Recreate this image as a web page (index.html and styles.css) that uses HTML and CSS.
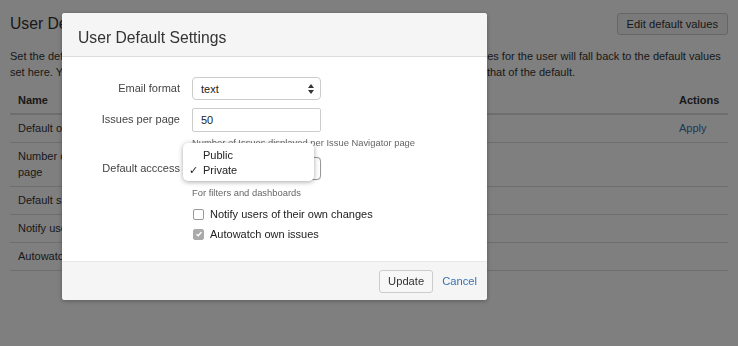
FILE: index.html
```html
<!DOCTYPE html>
<html lang="en">
<head>
    <meta charset="UTF-8">
    <title>User Defaults</title>
    <link rel="stylesheet" href="styles.css">
</head>
<body>
    <div class="page">
        <div class="page-head">
            <h1>User Defaults</h1>
            <button class="btn">Edit default values</button>
        </div>
        <p class="intro">Set the default user's preferences for new users here. When no preferences are set at all, the values for the user will fall back to the default values set here. You can apply any default to the existing users, which replaces their own old values with that of the default.</p>

        <table class="defaults">
            <thead>
                <tr>
                    <th class="col-name">Name</th>
                    <th>Value</th>
                    <th class="col-actions">Actions</th>
                </tr>
            </thead>
            <tbody>
                <tr>
                    <td>Default outgoing email format</td>
                    <td>text</td>
                    <td><a href="#">Apply</a></td>
                </tr>
                <tr>
                    <td>Number of issues displayed per<br>page</td>
                    <td>50</td>
                    <td></td>
                </tr>
                <tr>
                    <td>Default sharing for filters</td>
                    <td>Private</td>
                    <td></td>
                </tr>
                <tr>
                    <td>Notify users of their own changes</td>
                    <td>No</td>
                    <td></td>
                </tr>
                <tr>
                    <td>Autowatch own issues</td>
                    <td>Yes</td>
                    <td></td>
                </tr>
            </tbody>
        </table>
    </div>

    <div class="blanket"></div>

    <div class="dialog">
        <div class="dialog-header">
            <h2>User Default Settings</h2>
        </div>
        <div class="dialog-body">
            <form class="form">
                <label class="form-label">Email format</label>
                <div class="field">
                    <div class="select">
                        <span>text</span>
                        <svg width="6" height="10" viewBox="0 0 6 10"><path d="M0 4 L3 0 L6 4 Z M0 6 L3 10 L6 6 Z" fill="#333"/></svg>
                    </div>
                </div>

                <label class="form-label">Issues per page</label>
                <div class="field">
                    <input class="text-input" type="text" value="50">
                    <div class="help">Number of Issues displayed per Issue Navigator page</div>
                </div>

                <label class="form-label">Default acccess</label>
                <div class="field">
                    <div class="select select-open">
                        <span>Private</span>
                        <svg width="6" height="10" viewBox="0 0 6 10"><path d="M0 4 L3 0 L6 4 Z M0 6 L3 10 L6 6 Z" fill="#333"/></svg>
                        <ul class="options">
                            <li>Public</li>
                            <li class="selected">Private</li>
                        </ul>
                    </div>
                    <div class="help">For filters and dashboards</div>
                    <div class="check">
                        <span class="box"></span>
                        Notify users of their own changes
                    </div>
                    <div class="check">
                        <span class="box checked">
                            <svg width="8" height="8" viewBox="0 0 8 8"><path d="M1.5 4.2 L3.2 5.8 L6.5 2" stroke="#fff" stroke-width="1.3" fill="none"/></svg>
                        </span>
                        Autowatch own issues
                    </div>
                </div>
            </form>
        </div>
        <div class="dialog-footer">
            <button class="btn btn-update">Update</button>
            <a href="#" class="cancel">Cancel</a>
        </div>
    </div>
</body>
</html>
```

FILE: styles.css
```css
body {
    margin: 0;
    font-family: "Liberation Sans", Arial, sans-serif;
    font-size: 11px;
    color: #333;
    background: #fff;
}
.page {
    padding: 13px 10px;
}
.page-head {
    display: flex;
    justify-content: space-between;
    align-items: center;
    height: 22px;
}
.page-head h1 {
    margin: 0;
    font-size: 15.7px;
    font-weight: normal;
    line-height: 22px;
}
.btn {
    font-family: inherit;
    font-size: 11.2px;
    color: #333;
    background: #f5f5f5;
    border: 1px solid #ccc;
    border-radius: 3px;
    height: 22px;
    padding: 0 9px;
}
.intro {
    margin: 13px 0 7px 0;
    line-height: 16px;
}
.defaults {
    width: 100%;
    border-collapse: collapse;
}
.defaults th,
.defaults td {
    text-align: left;
    vertical-align: top;
    padding: 5px 8px 6px 8px;
    line-height: 16px;
    border-bottom: 1px solid #ddd;
}
.defaults th {
    font-weight: bold;
    border-bottom-width: 2px;
    padding-bottom: 5px;
}
.col-name {
    width: 170px;
}
.col-actions {
    width: 41px;
}
.defaults a {
    color: #3572b0;
    text-decoration: none;
}

.blanket {
    position: fixed;
    inset: 0;
    background: rgba(0, 0, 0, 0.5);
}
.dialog {
    position: absolute;
    left: 62px;
    top: 13px;
    width: 425px;
    height: 287px;
    background: #fff;
    border-radius: 3px;
    box-shadow: 0 1px 4px rgba(0, 0, 0, 0.3);
    display: flex;
    flex-direction: column;
}
.dialog-header {
    background: #f5f5f5;
    border-bottom: 1px solid #ddd;
    border-radius: 3px 3px 0 0;
    padding: 15px 16px 8px 16px;
}
.dialog-header h2 {
    margin: 0;
    font-size: 15.7px;
    font-weight: normal;
    line-height: 20px;
    color: #333;
}
.dialog-body {
    flex: 1;
    padding: 20px 20px 0 20px;
}
.form {
    display: grid;
    grid-template-columns: 98px 129px;
    column-gap: 12px;
    row-gap: 8px;
    align-items: start;
}
.form-label {
    text-align: right;
    line-height: 23px;
    color: #444;
    white-space: nowrap;
}
.field {
    position: relative;
}
.select {
    position: relative;
    display: flex;
    align-items: center;
    justify-content: space-between;
    height: 21px;
    padding: 0 6px 0 8px;
    border: 1px solid #ccc;
    border-radius: 4px;
    background: #fff;
    color: #222;
}
.select-open {
    border-color: #999;
    box-shadow: 0 0 1px rgba(0, 0, 0, 0.2);
}
.text-input {
    display: block;
    box-sizing: border-box;
    width: 100%;
    height: 24px;
    padding: 0 8px;
    border: 1px solid #ccc;
    border-radius: 2px;
    font-family: inherit;
    font-size: 11px;
    color: #222;
}
.help {
    font-size: 9.4px;
    line-height: 12px;
    color: #666;
    margin-top: 5px;
    white-space: nowrap;
}
.select-open + .help {
    margin-top: 7px;
}
.options {
    position: absolute;
    left: -10px;
    top: -15px;
    width: 131px;
    margin: 0;
    padding: 5px 0 3px 0;
    list-style: none;
    background: #fff;
    border-radius: 5px;
    box-shadow: 0 1px 5px rgba(0, 0, 0, 0.35);
    box-sizing: border-box;
}
.options li {
    position: relative;
    padding-left: 20px;
    line-height: 15px;
    color: #222;
}
.options .selected::before {
    content: "✓";
    position: absolute;
    left: 6px;
}
.check {
    display: flex;
    align-items: center;
    gap: 6px;
    line-height: 16px;
    margin-top: 4px;
    color: #222;
    white-space: nowrap;
}
.help + .check {
    margin-top: 7px;
}
.box {
    flex: none;
    display: inline-flex;
    align-items: center;
    justify-content: center;
    width: 9px;
    height: 9px;
    margin-left: 1px;
    border: 1px solid #999;
    border-radius: 2px;
    background: #fff;
}
.box.checked {
    background: #aaa;
    border-color: #aaa;
}
.dialog-footer {
    display: flex;
    justify-content: flex-end;
    align-items: center;
    gap: 9px;
    height: 38px;
    padding: 0 10px;
    background: #f5f5f5;
    border-top: 1px solid #e8e8e8;
    border-radius: 0 0 3px 3px;
}
.btn-update {
    height: 23px;
    padding: 0 8px;
    background: #f7f7f7;
}
.cancel {
    color: #3572b0;
    text-decoration: none;
    font-size: 11.2px;
}
```
